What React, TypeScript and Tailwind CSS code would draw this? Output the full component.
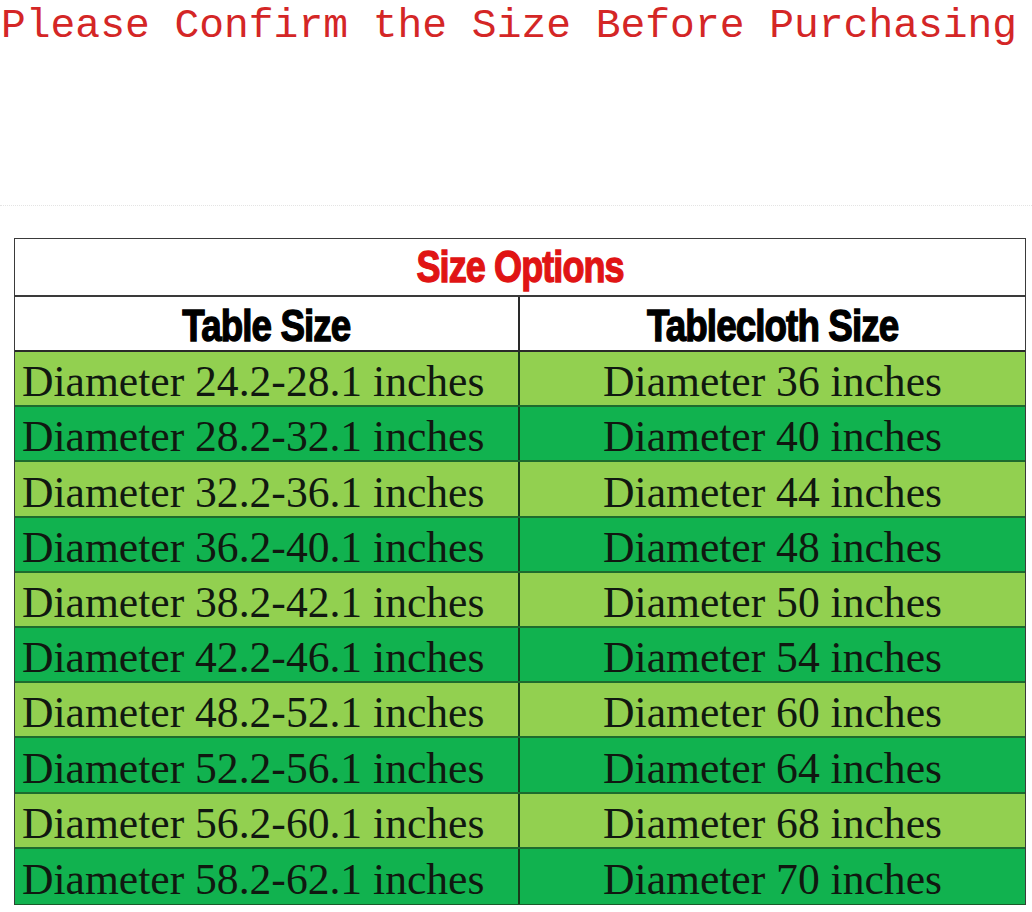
import React from "react";

const rows: [string, string][] = [
  ["Diameter 24.2-28.1 inches", "Diameter 36 inches"],
  ["Diameter 28.2-32.1 inches", "Diameter 40 inches"],
  ["Diameter 32.2-36.1 inches", "Diameter 44 inches"],
  ["Diameter 36.2-40.1 inches", "Diameter 48 inches"],
  ["Diameter 38.2-42.1 inches", "Diameter 50 inches"],
  ["Diameter 42.2-46.1 inches", "Diameter 54 inches"],
  ["Diameter 48.2-52.1 inches", "Diameter 60 inches"],
  ["Diameter 52.2-56.1 inches", "Diameter 64 inches"],
  ["Diameter 56.2-60.1 inches", "Diameter 68 inches"],
  ["Diameter 58.2-62.1 inches", "Diameter 70 inches"],
];

export default function App() {
  const serif = { fontFamily: '"Liberation Serif", "Times New Roman", serif' };
  const narrow = {
    fontFamily: '"Liberation Sans", Arial, sans-serif',
  };
  return (
    <div className="w-[1032px] h-[912px] bg-white overflow-hidden">
      <div
        className="h-[50px] pt-[6px] pl-[1px] text-[41.3px] leading-[41px] text-[#d42626] whitespace-nowrap"
        style={{ fontFamily: '"Liberation Mono", "Courier New", monospace' }}
      >
        Please Confirm the Size Before Purchasing
      </div>
      <div className="mt-[155px] h-0 border-t border-dotted border-[#e4e4e4]" />
      <div className="mt-[32px] ml-[14px] w-[1012px] border border-[#3a3a3a] border-b-[#1a5a2a]">
        <div className="h-[58px] flex items-center justify-center border-b-2 border-[#3a3a3a] bg-white">
          <span
            className="inline-block text-[40px] font-bold text-[#e01414] leading-none tracking-[-1px] scale-x-[0.9] scale-y-[1.1] [-webkit-text-stroke:1.2px_#e01414]"
            style={narrow}
          >
            Size Options
          </span>
        </div>
        <div className="h-[55px] flex border-b-2 border-[#2a2a2a] bg-white">
          <div className="w-[505px] flex items-center justify-center border-r-2 border-[#2a2a2a] pt-[2px]">
            <span
              className="inline-block text-[40px] font-bold text-black leading-none tracking-[-1px] scale-x-[0.92] scale-y-[1.12] [-webkit-text-stroke:1.2px_#000]"
              style={narrow}
            >
              Table Size
            </span>
          </div>
          <div className="flex-1 flex items-center justify-center pt-[2px]">
            <span
              className="inline-block text-[40px] font-bold text-black leading-none tracking-[-1px] scale-x-[0.92] scale-y-[1.12] [-webkit-text-stroke:1.2px_#000]"
              style={narrow}
            >
              Tablecloth Size
            </span>
          </div>
        </div>
        {rows.map(([a, b], i) => (
          <div
            key={i}
            className={`h-[55.2px] flex border-b-2 last:border-b-0 border-[#1d6b2e] ${
              i % 2 === 0 ? "bg-[#92d050]" : "bg-[#11b24f]"
            }`}
          >
            <div
              className="w-[505px] flex items-center pl-[7px] pt-[7px] border-r-2 border-[#1a3a1a] text-[43.6px] leading-none text-[#101810] whitespace-nowrap"
              style={serif}
            >
              {a}
            </div>
            <div
              className="flex-1 flex items-center justify-center pt-[7px] text-[43.6px] leading-none text-[#101810] whitespace-nowrap"
              style={serif}
            >
              {b}
            </div>
          </div>
        ))}
      </div>
    </div>
  );
}
